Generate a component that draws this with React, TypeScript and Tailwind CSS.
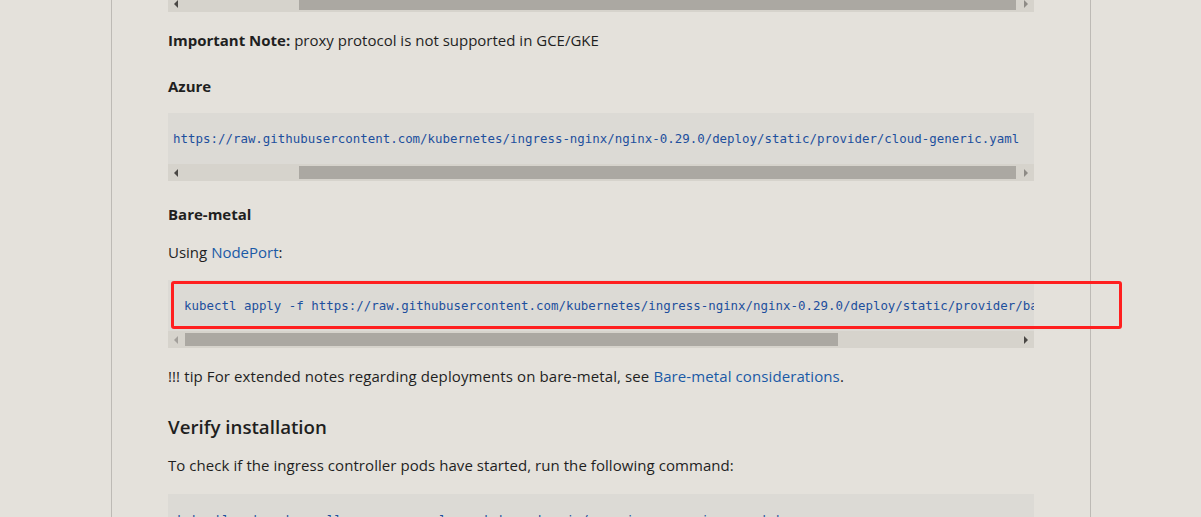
import { FC } from "react";

interface IScrollProps {
    spacer: string;
    thumb: string;
    leftOn: boolean;
    rightOn: boolean;
    extra?: string;
}

const ScrollBar: FC<IScrollProps> = ({ spacer, thumb, leftOn, rightOn, extra }) => {
    return (
        <div className={`flex h-[17px] w-full items-center bg-[#d6d3cc] ${extra ?? ""}`}>
            <div className="flex w-[16px] h-full items-center justify-center">
                <span className={`block w-0 h-0 border-y-[4px] border-y-transparent border-r-[4px] ${leftOn ? "border-r-[#4a4845]" : "border-r-[#a3a09b]"}`} />
            </div>
            <div className="flex flex-1 h-full items-center">
                <div className={spacer} />
                <div className={`h-[13px] bg-[#aba8a2] ${thumb}`} />
            </div>
            <div className="flex w-[16px] h-full items-center justify-center">
                <span className={`block w-0 h-0 border-y-[4px] border-y-transparent border-l-[4px] ${rightOn ? "border-l-[#4a4845]" : "border-l-[#8e8b86]"}`} />
            </div>
        </div>
    );
};

const codeFont = { fontFamily: "'DejaVu Sans Mono', 'Liberation Mono', monospace" };

const App: FC = () => {
    return (
        <div className="h-[517px] overflow-hidden bg-[#e4e1db] text-[#1f1f1f]" style={{ fontFamily: "'Open Sans', 'Noto Sans', sans-serif" }}>
            <div className="ml-[111px] w-[980px] min-h-[560px] border-x border-[#bdbab5] px-[56px]">

                <ScrollBar spacer="w-[115px]" thumb="w-[717px]" leftOn={true} rightOn={false} extra="-mt-[5px]" />

                <p className="mt-[16px] text-[15px] leading-[24px]">
                    <strong className="font-bold">Important Note:</strong> proxy protocol is not supported in GCE/GKE
                </p>

                <h4 className="mt-[22px] text-[15px] leading-[24px] font-bold">Azure</h4>

                <div className="mt-[15px]">
                    <div className="h-[51px] bg-[#dcdad5] flex items-center overflow-hidden whitespace-nowrap pl-[5px] pt-[1px]">
                        <code className="text-[12.45px] text-[#1d4f9d]" style={codeFont}>
                            https://raw.githubusercontent.com/kubernetes/ingress-nginx/nginx-0.29.0/deploy/static/provider/cloud-generic.yaml
                        </code>
                    </div>
                    <ScrollBar spacer="w-[115px]" thumb="w-[717px]" leftOn={true} rightOn={false} />
                </div>

                <h4 className="mt-[21px] text-[15px] leading-[24px] font-bold">Bare-metal</h4>

                <p className="mt-[14px] text-[15px] leading-[24px]">
                    Using <a className="text-[#1a5aa6]">NodePort</a>:
                </p>

                <div className="mt-[16px] relative">
                    <div className="h-[51px] bg-[#dcdad5] flex items-center overflow-hidden whitespace-nowrap pl-[16px] pt-[2px]">
                        <code className="text-[12.45px] text-[#1d4f9d]" style={codeFont}>
                            kubectl apply -f https://raw.githubusercontent.com/kubernetes/ingress-nginx/nginx-0.29.0/deploy/static/provider/baremetal/service-nodeport.yaml
                        </code>
                    </div>
                    <ScrollBar spacer="w-[1px]" thumb="w-[653px]" leftOn={false} rightOn={true} />
                    <div className="absolute left-[3px] top-[1px] w-[951px] h-[48px] border-[3px] border-[#ff1f1f] rounded-[3px]" />
                </div>

                <p className="mt-[16px] text-[15px] leading-[24px] tracking-[0.1px] text-[#1f1f1f]">
                    <span>!!! tip</span> For extended notes regarding deployments on bare-metal, see <a className="text-[#1a5aa6]">Bare-metal considerations</a>.
                </p>

                <h3 className="mt-[25px] text-[18.7px] leading-[28px] font-semibold">Verify installation</h3>

                <p className="mt-[12px] text-[15px] leading-[24px] tracking-[0.06px]">
                    To check if the ingress controller pods have started, run the following command:
                </p>

                <div className="mt-[17px] h-[51px] bg-[#dcdad5] flex items-center overflow-hidden whitespace-nowrap pl-[9px] pt-[1px]">
                    <code className="text-[12.45px] text-[#1d4f9d]" style={codeFont}>
                        kubectl get pods --all-namespaces -l app.kubernetes.io/name=ingress-nginx --watch
                    </code>
                </div>
            </div>
        </div>
    );
};

export default App;
